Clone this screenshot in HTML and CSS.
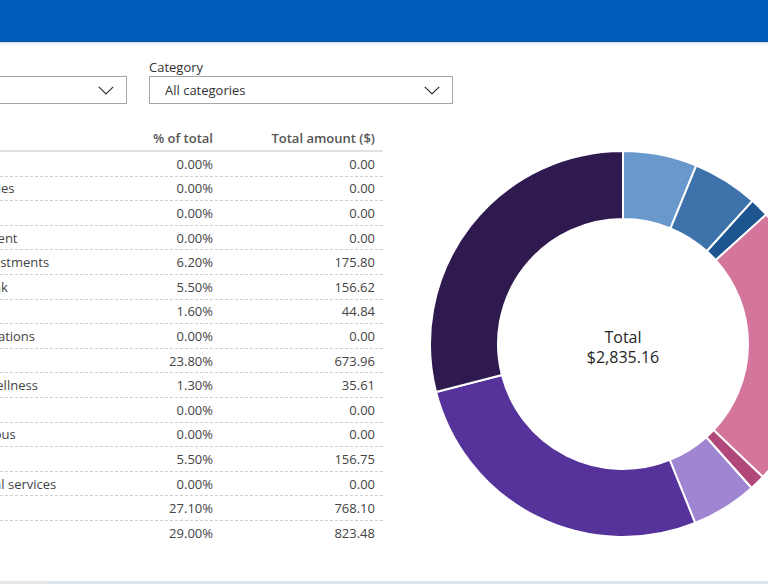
FILE: index.html
```html
<!DOCTYPE html>
<html lang="en">
<head>
<meta charset="utf-8">
<title>Spending by category</title>
<link rel="stylesheet" href="styles.css">
</head>
<body>
<header class="topbar"></header>
<main class="page">
  <div class="filters">
    <div class="field">
      <div class="field-label">Month</div>
      <div class="select"><span class="select-value">All months</span>
        <svg class="chevron" width="16" height="9" viewBox="0 0 16 9"><polyline points="0.8,0.8 8,8 15.2,0.8" fill="none" stroke="#333" stroke-width="1.2"/></svg>
      </div>
    </div>
    <div class="field">
      <div class="field-label">Category</div>
      <div class="select"><span class="select-value">All categories</span>
        <svg class="chevron" width="16" height="9" viewBox="0 0 16 9"><polyline points="0.8,0.8 8,8 15.2,0.8" fill="none" stroke="#333" stroke-width="1.2"/></svg>
      </div>
    </div>
  </div>
  <div class="content">
    <div class="summary">
      <div class="row head"><span class="c-label">Category</span><span class="c-num">% of total</span><span class="c-amt">Total amount ($)</span></div>
      <div class="row"><span class="c-label">Car finance</span><span class="c-num">0.00%</span><span class="c-amt">0.00</span></div>
      <div class="row"><span class="c-label">Bills &amp; utilities</span><span class="c-num">0.00%</span><span class="c-amt">0.00</span></div>
      <div class="row"><span class="c-label">Education</span><span class="c-num">0.00%</span><span class="c-amt">0.00</span></div>
      <div class="row"><span class="c-label">Entertainment</span><span class="c-num">0.00%</span><span class="c-amt">0.00</span></div>
      <div class="row"><span class="c-label">Fees &amp; adjustments</span><span class="c-num">6.20%</span><span class="c-amt">175.80</span></div>
      <div class="row"><span class="c-label">Food &amp; drink</span><span class="c-num">5.50%</span><span class="c-amt">156.62</span></div>
      <div class="row"><span class="c-label">Fuel</span><span class="c-num">1.60%</span><span class="c-amt">44.84</span></div>
      <div class="row"><span class="c-label">Gifts &amp; donations</span><span class="c-num">0.00%</span><span class="c-amt">0.00</span></div>
      <div class="row"><span class="c-label">Groceries</span><span class="c-num">23.80%</span><span class="c-amt">673.96</span></div>
      <div class="row"><span class="c-label">Health &amp; wellness</span><span class="c-num">1.30%</span><span class="c-amt">35.61</span></div>
      <div class="row"><span class="c-label">Kids</span><span class="c-num">0.00%</span><span class="c-amt">0.00</span></div>
      <div class="row"><span class="c-label">Miscellaneous</span><span class="c-num">0.00%</span><span class="c-amt">0.00</span></div>
      <div class="row"><span class="c-label">Pets</span><span class="c-num">5.50%</span><span class="c-amt">156.75</span></div>
      <div class="row"><span class="c-label">Professional services</span><span class="c-num">0.00%</span><span class="c-amt">0.00</span></div>
      <div class="row"><span class="c-label">Rent</span><span class="c-num">27.10%</span><span class="c-amt">768.10</span></div>
      <div class="row last"><span class="c-label">Transport</span><span class="c-num">29.00%</span><span class="c-amt">823.48</span></div>
    </div>
    <div class="chart">
      <svg class="donut" width="386" height="386" viewBox="0 0 386 386">
        <g stroke="#fff" stroke-width="2" stroke-linejoin="miter">
          <path fill="#6898cc" d="M193 0 A193 193 0 0 1 266.30 14.46 L240.48 77.36 A125 125 0 0 0 193 68 Z"/>
          <path fill="#3e72aa" d="M266.30 14.46 A193 193 0 0 1 322.45 49.85 L276.84 100.29 A125 125 0 0 0 240.48 77.36 Z"/>
          <path fill="#1d5590" d="M322.45 49.85 A193 193 0 0 1 336.15 63.55 L285.71 109.16 A125 125 0 0 0 276.84 100.29 Z"/>
          <path fill="#d4769c" d="M336.15 63.55 A193 193 0 0 1 332.85 326.02 L283.58 279.15 A125 125 0 0 0 285.71 109.16 Z"/>
          <path fill="#b0487a" d="M332.85 326.02 A193 193 0 0 1 321.54 336.96 L276.25 286.24 A125 125 0 0 0 283.58 279.15 Z"/>
          <path fill="#a086d2" d="M321.54 336.96 A193 193 0 0 1 265.18 372.01 L239.75 308.94 A125 125 0 0 0 276.25 286.24 Z"/>
          <path fill="#55339a" d="M265.18 372.01 A193 193 0 0 1 6.06 241.00 L71.92 224.09 A125 125 0 0 0 239.75 308.94 Z"/>
          <path fill="#2f1a50" d="M6.06 241.00 A193 193 0 0 1 193 0 L193 68 A125 125 0 0 0 71.92 224.09 Z"/>
        </g>
        <text class="donut-label" x="193" y="192">Total</text>
        <text class="donut-label" x="193" y="212">$2,835.16</text>
      </svg>
    </div>
  </div>
</main>
<div class="scrollbar"><div class="scroll-start"></div><div class="scroll-thumb"></div></div>
</body>
</html>
```
FILE: styles.css
```css
html, body {
  margin: 0;
  padding: 0;
  width: 768px;
  height: 584px;
  overflow: hidden;
  background: #fff;
}
body {
  display: flex;
  flex-direction: column;
  font-family: "Open Sans", "Liberation Sans", sans-serif;
  font-size: 13px;
  color: #444;
}
.topbar {
  flex: none;
  height: 42px;
  box-sizing: border-box;
  background: #005cb9;
  border-bottom: 1px solid #0b4d96;
  box-shadow: 0 1px 3px rgba(0, 90, 180, 0.25);
}
.page {
  flex: none;
  margin-left: -177px;
  padding-top: 16px;
}
.filters {
  display: flex;
  gap: 22px;
}
.field {
  width: 304px;
}
.field-label {
  height: 18px;
  line-height: 18px;
  color: #333;
}
.select {
  height: 28px;
  box-sizing: border-box;
  border: 1px solid #a6a6a6;
  display: flex;
  align-items: center;
  justify-content: space-between;
  padding: 0 12px 0 15px;
  color: #333;
}
.select-value {
  line-height: 18px;
}
.chevron {
  display: block;
}
.content {
  display: flex;
  align-items: flex-start;
  margin-left: 87px;
  margin-top: 22px;
}
.summary {
  flex: none;
  width: 473px;
}
.row {
  display: grid;
  grid-template-columns: 183px 120px 170px;
  align-items: center;
  height: 24.6px;
  box-sizing: border-box;
  border-bottom: 1px dashed #cfcfcf;
  white-space: nowrap;
}
.row.head {
  height: 26px;
  border-bottom: 2px solid #e2e2e2;
  font-weight: 600;
  color: #555;
}
.row.last {
  border-bottom: none;
}
.c-label {
  padding-left: 20px;
  overflow: hidden;
}
.c-num {
  text-align: right;
}
.c-amt {
  text-align: right;
  padding-right: 8px;
}
.chart {
  flex: none;
  margin-left: 47px;
  margin-top: 25px;
}
.donut {
  display: block;
}
.donut-label {
  font-family: "Open Sans", "Liberation Sans", sans-serif;
  font-size: 16px;
  fill: #252525;
  text-anchor: middle;
}
.scrollbar {
  margin-top: auto;
  flex: none;
  height: 3px;
  display: flex;
}
.scroll-start {
  width: 48px;
  background: #e6e6e6;
}
.scroll-thumb {
  flex: 1;
  background: #d8e4ee;
}
```
